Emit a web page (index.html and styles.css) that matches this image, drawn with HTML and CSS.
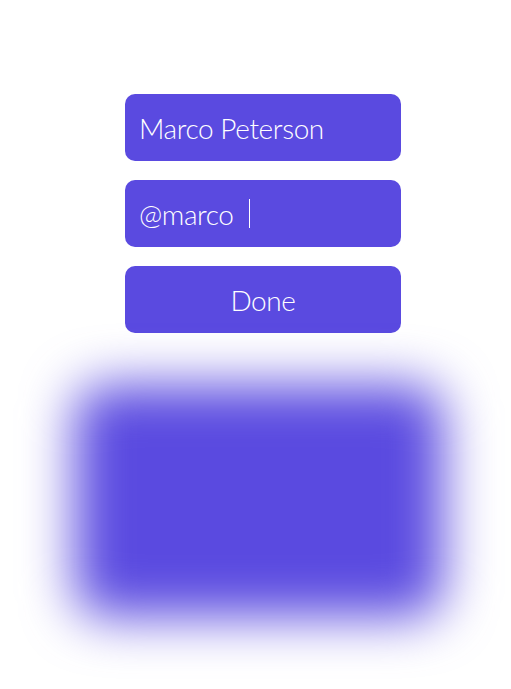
FILE: index.html
```html
<!DOCTYPE html>
<html>
<head>
<meta charset="utf-8">
<link rel="stylesheet" href="styles.css">
</head>
<body>
<main class="page">
  <div class="form">
    <div class="field"><span class="value">Marco Peterson</span></div>
    <div class="field"><span class="value">@marco</span><span class="cursor"></span></div>
    <div class="field button"><span class="value">Done</span></div>
  </div>
  <div class="card-blur"></div>
</main>
</body>
</html>
```

FILE: styles.css
```css
html, body {
  margin: 0;
  padding: 0;
  background: #ffffff;
  overflow: hidden;
}
.page {
  width: 511px;
  height: 689px;
  display: flex;
  flex-direction: column;
  padding-top: 94px;
  box-sizing: border-box;
}
.form {
  display: flex;
  flex-direction: column;
  gap: 19px;
  margin-left: 125px;
  width: 276px;
}
.field {
  height: 67px;
  border-radius: 10px;
  background: #5a4ae0;
  display: flex;
  align-items: center;
  padding-left: 14px;
  color: #ffffff;
  font-family: "Lato", "Open Sans", sans-serif;
  font-weight: 300;
  font-size: 28px;
  letter-spacing: -0.4px;
}
.value {
  line-height: 1;
}
.cursor {
  width: 1px;
  height: 29px;
  background: #ffffff;
  margin-left: 15px;
}
.button {
  justify-content: center;
  padding-left: 0;
}
.card-blur {
  margin-top: 52px;
  margin-left: 75px;
  width: 368px;
  height: 232px;
  border-radius: 30px;
  background: #5a4ae0;
  filter: blur(26px);
}
```
